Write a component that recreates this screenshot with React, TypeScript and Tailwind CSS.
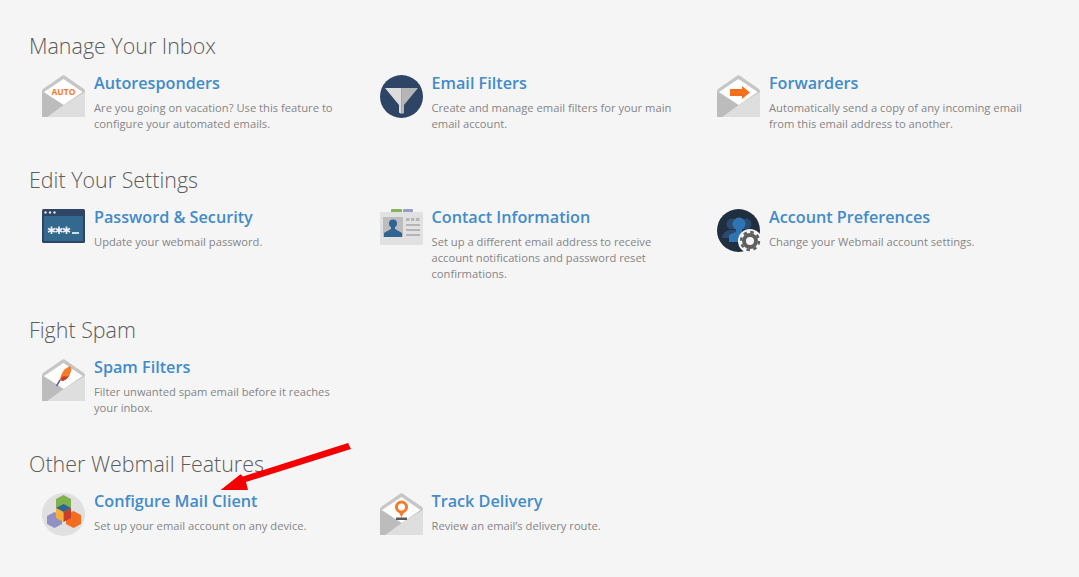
import { ReactNode } from "react";

type Feature = { title: string; desc: string; icon: ReactNode };
type Section = { heading: string; items: Feature[] };

// open envelope, the letter part shows whatever is passed in
function Envelope({ children }: { children?: ReactNode }) {
  return (
    <svg width="43" height="42" viewBox="0 0 43 42" className="shrink-0">
      <path d="M20.5 .6 Q21.5 0 22.5 .6 L42 14 Q43 15 43 16 V41 Q43 42 42 42 H1 Q0 42 0 41 V16 Q0 15 1 14Z" fill="#c6c6c6" />
      <path d="M21.5 4 L40.5 17 L21.5 30 L2 17Z" fill="#fff" />
      <path d="M43 17 V41 Q43 42 42 42 H5 L21.5 30Z" fill="#dedede" />
      <path d="M0 17 L21.5 30 L5 42 H1 Q0 42 0 41Z" fill="#bcbcbc" />
      {children}
    </svg>
  );
}

function AutoIcon() {
  return (
    <Envelope>
      <text x="21.5" y="20" textAnchor="middle" fontSize="8.5" fontWeight="700" fill="#f47b2a" className="font-['Open_Sans',sans-serif]">
        AUTO
      </text>
    </Envelope>
  );
}

function FilterIcon() {
  return (
    <svg width="43" height="43" viewBox="0 0 43 43" className="shrink-0">
      <circle cx="21.5" cy="21.5" r="21.5" fill="#2f4565" />
      <path d="M5 13 H21.6 V39 L19 37.5 V30Z" fill="#dcdcdc" />
      <path d="M21.6 13 H38 L24 30 V38 L21.6 39Z" fill="#b5b5b5" />
    </svg>
  );
}

function ForwardIcon() {
  return (
    <Envelope>
      <path d="M13 14 H25 V11 L33 17.5 L25 24 V21 H13Z" fill="#f4701f" />
    </Envelope>
  );
}

function PasswordIcon() {
  return (
    <svg width="43" height="34" viewBox="0 0 43 34" className="shrink-0">
      <rect width="43" height="34" rx="1.5" fill="#2f4565" />
      <rect x="2" y="7" width="39" height="25" fill="#33688f" />
      <circle cx="3.5" cy="3.5" r="1.2" fill="#dfe5ec" />
      <circle cx="8" cy="3.5" r="1.2" fill="#dfe5ec" />
      <circle cx="12.5" cy="3.5" r="1.2" fill="#dfe5ec" />
      {/* three asterisks and a cursor */}
      <g stroke="#eef2f6" strokeWidth="1.7" fill="none">
        <path d="M9.5 17.5 V25 M6 19.5 L13 23 M13 19.5 L6 23" />
        <path d="M17 17.5 V25 M13.5 19.5 L20.5 23 M20.5 19.5 L13.5 23" />
        <path d="M24.5 17.5 V25 M21 19.5 L28 23 M28 19.5 L21 23" />
        <path d="M30 24 H37" />
      </g>
    </svg>
  );
}

function ContactIcon() {
  return (
    <svg width="43" height="36" viewBox="0 0 43 36" className="shrink-0">
      <rect x="11" y="0" width="11" height="5" rx="1" fill="#86b35a" />
      <rect x="23" y="0" width="10" height="5" rx="1" fill="#9b9bd0" />
      <rect y="3" width="43" height="33" rx="1.5" fill="#e1e1e1" />
      <rect x="3" y="8" width="20" height="20" fill="#bdbdbd" />
      <circle cx="13" cy="14.5" r="4" fill="#2f6494" />
      <path d="M11 17 H15 V20 L22 24 V28 H4 V24 L11 20Z" fill="#2f6494" />
      <g fill="#b5b5b5">
        <rect x="26" y="9" width="3.5" height="3" />
        <rect x="31" y="9" width="3.5" height="3" />
        <rect x="36" y="9" width="3.5" height="3" />
        <rect x="26" y="15" width="14" height="2" />
        <rect x="26" y="20" width="14" height="2" />
        <rect x="26" y="25" width="14" height="2" />
      </g>
    </svg>
  );
}

function PrefsIcon() {
  return (
    <svg width="45" height="44" viewBox="0 0 45 44" className="shrink-0">
      <circle cx="21.5" cy="21.5" r="21.5" fill="#1f2f40" />
      <circle cx="15" cy="15" r="5.5" fill="#2a4a6e" />
      <circle cx="29" cy="15" r="5.5" fill="#2a4a6e" />
      <path d="M5 29 Q6 22 13 21 H31 Q38 22 39 29Z" fill="#2a4a6e" />
      <circle cx="22" cy="15" r="6.5" fill="#2f75b5" />
      <path d="M19 20 H25 V23 L32 26 V33 H12 V26 L19 23Z" fill="#2f75b5" />
      <circle cx="33" cy="32" r="12" fill="#f5f5f5" />
      <circle cx="33" cy="32" r="6" fill="none" stroke="#5f5f5f" strokeWidth="4" />
      <circle cx="33" cy="32" r="9" fill="none" stroke="#5f5f5f" strokeWidth="2.4" strokeDasharray="3.5 3.57" />
    </svg>
  );
}

function SpamIcon() {
  return (
    <Envelope>
      <path d="M28 7 Q31 9 28 15 Q26 20 21 22 L18 21 Q19 14 23 10Z" fill="#f47b2a" />
      <path d="M21 22 Q26 20 28 15 Q26 19 22 17 Q19 18 18 21Z" fill="#c8402a" />
      <path d="M18 21 L14.5 27" stroke="#5e5ea8" strokeWidth="1.5" fill="none" />
    </Envelope>
  );
}

function MailClientIcon() {
  return (
    <svg width="43" height="43" viewBox="0 0 43 43" className="shrink-0">
      <circle cx="21.5" cy="21.5" r="21.5" fill="#e0e0e0" />
      <path d="M21.5 2 L29 6 V16 L21.5 20 L14 16 V6Z" fill="#7fb24f" />
      <path d="M12.5 19 L20 23 V31 L12.5 35 L5 31 V23Z" fill="#8f90c4" />
      <path d="M31.5 18 L39 22 V31 L31.5 35 L24 31 V22Z" fill="#f26d21" />
      <path d="M21.5 11 L29 15 L21.5 19 L14 15Z" fill="#2f6494" />
      <path d="M14 15 L21.5 19 V29 L14 25Z" fill="#f3b03c" />
      <path d="M29 15 L21.5 19 V29 L29 25Z" fill="#c6402d" />
    </svg>
  );
}

function TrackIcon() {
  return (
    <Envelope>
      <circle cx="21.5" cy="14" r="5" fill="#fff" stroke="#f47b2a" strokeWidth="3" />
      <path d="M18.5 18.5 L21.5 24.5 L24.5 18.5Z" fill="#f47b2a" />
      <rect x="16" y="24.5" width="11" height="2.5" fill="#5a5a5a" />
    </Envelope>
  );
}

const sections: Section[] = [
  {
    heading: "Manage Your Inbox",
    items: [
      { title: "Autoresponders", desc: "Are you going on vacation? Use this feature to configure your automated emails.", icon: <AutoIcon /> },
      { title: "Email Filters", desc: "Create and manage email filters for your main email account.", icon: <FilterIcon /> },
      { title: "Forwarders", desc: "Automatically send a copy of any incoming email from this email address to another.", icon: <ForwardIcon /> },
    ],
  },
  {
    heading: "Edit Your Settings",
    items: [
      { title: "Password & Security", desc: "Update your webmail password.", icon: <PasswordIcon /> },
      { title: "Contact Information", desc: "Set up a different email address to receive account notifications and password reset confirmations.", icon: <ContactIcon /> },
      { title: "Account Preferences", desc: "Change your Webmail account settings.", icon: <PrefsIcon /> },
    ],
  },
  {
    heading: "Fight Spam",
    items: [
      { title: "Spam Filters", desc: "Filter unwanted spam email before it reaches your inbox.", icon: <SpamIcon /> },
    ],
  },
  {
    heading: "Other Webmail Features",
    items: [
      { title: "Configure Mail Client", desc: "Set up your email account on any device.", icon: <MailClientIcon /> },
      { title: "Track Delivery", desc: "Review an email’s delivery route.", icon: <TrackIcon /> },
    ],
  },
];

export default function App() {
  return (
    <div className="relative min-h-screen overflow-hidden bg-[#f5f5f5] pl-[29px] pt-[31px] font-['Open_Sans',sans-serif]">
      {sections.map((section) => (
        <section key={section.heading} className="mb-[33px]">
          <h2 className="text-[21.45px] leading-[30px] font-light text-[#5c5c5c]">{section.heading}</h2>
          <div className="mt-[11px] grid grid-cols-[337.5px_337.5px_337.5px]">
            {section.items.map((item) => (
              <div key={item.title} className="flex pl-[13px]">
                <div className="mt-[3px] w-[52px] shrink-0">{item.icon}</div>
                <div className="w-[258px]">
                  <a className="block text-[16.2px] leading-[22px] font-semibold text-[#428bca]">{item.title}</a>
                  <p className="mt-[6px] text-[11.2px] leading-[16px] text-[#858585]">{item.desc}</p>
                </div>
              </div>
            ))}
          </div>
        </section>
      ))}
      {/* red annotation arrow drawn over the page */}
      <svg className="absolute left-[215px] top-[438px]" width="140" height="56" viewBox="215 438 140 56">
        <path d="M348 443 L351 449 L246 482 L248 490 L220.7 490 L240.5 474.3 L243 476.5Z" fill="#f50000" />
      </svg>
    </div>
  );
}
